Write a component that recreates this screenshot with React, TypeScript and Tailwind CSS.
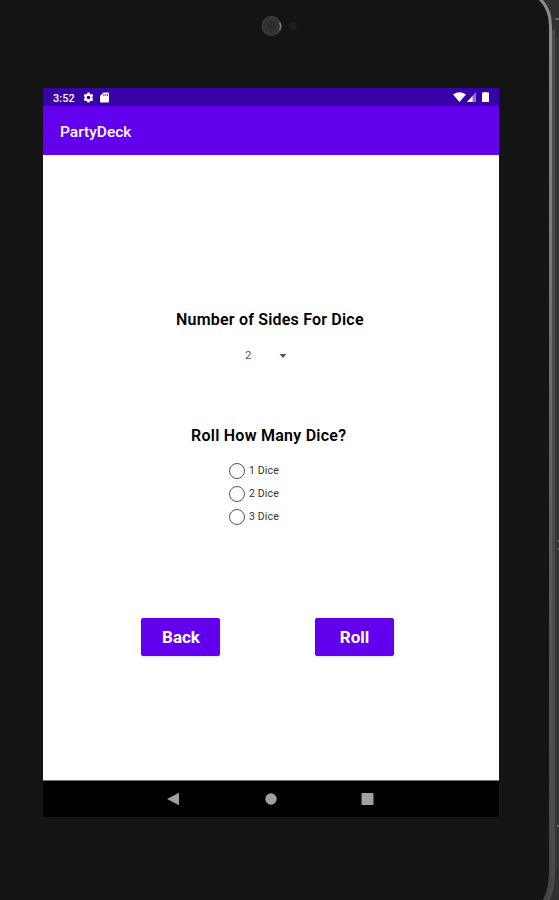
import { useState } from "react";

const diceOptions = ["1 Dice", "2 Dice", "3 Dice"];

const TabletEdge = () => (
  <svg
    className="absolute top-0 right-0"
    width="29"
    height="900"
    viewBox="530 0 29 900"
    fill="none"
  >
    <defs>
      <linearGradient id="rim" x1="0" y1="0" x2="0" y2="900" gradientUnits="userSpaceOnUse">
        <stop offset="0" stopColor="#8c8c8c" />
        <stop offset="0.3" stopColor="#777777" />
        <stop offset="0.6" stopColor="#5c5c5c" />
        <stop offset="1" stopColor="#454545" />
      </linearGradient>
    </defs>
    <path d="M539 0Q549 9 549 25V872Q549 890 543 900H559V0Z" fill="#303030" />
    <path d="M540 -1Q550.500 9 550.500 26V873Q550.500 889 544 901" stroke="url(#rim)" strokeWidth="3" />
    <path d="M553.500 30V872Q553.500 888 548 900" stroke="#4b4b4b" strokeWidth="3" />
    <path d="M556.500 38V870" stroke="#3d3d3d" />
    <path d="M555 19H559M557 826H559" stroke="#999999" />
    <path d="M557 541H559M557 549H559" stroke="#77775f" />
  </svg>
);

const Camera = () => (
  <svg className="absolute top-[14px] left-[258px]" width="44" height="26" viewBox="0 0 44 26">
    <circle cx="13.500" cy="12" r="9" fill="#303030" stroke="#3c3c3c" strokeWidth="2" />
    <circle cx="13.500" cy="11.500" r="5" fill="#2c2c2c" stroke="#393939" />
    <path d="M21.500 8.500Q24 12 21.500 16" stroke="#7c7c7c" strokeWidth="1.500" fill="none" />
    <circle cx="34.500" cy="12" r="4" fill="#1e1e1e" />
  </svg>
);

const StatusBar = () => (
  <div className="flex h-[18px] items-center justify-between bg-[#3700a8] pr-[10px] pl-[10px] text-white">
    <div className="flex items-center">
      <span className="w-[30px] pt-[2px] text-[11px] leading-none font-medium">3:52</span>
      <svg width="11" height="11" viewBox="0 0 24 24" fill="currentColor">
        <path
          fillRule="evenodd"
          d="M9.500 1h5l.6 3 2 1.200L20 4l2.500 4.500L20.300 10.500v3l2.200 2L20 20l-3-1-2 1.200-.6 2.800h-5l-.6-2.800L7 19l-3 1-2.500-4.500 2.200-2v-3L1.500 8.500 4 4l3 1.200L9 4ZM12 8a4 4 0 1 0 0 8 4 4 0 0 0 0-8Z"
        />
      </svg>
      <svg className="ml-[6px]" width="9" height="11" viewBox="0 0 9 11" fill="currentColor">
        <path
          fillRule="evenodd"
          d="M3.500.5H8q1 0 1 1v8q0 1-1 1H1q-1 0-1-1V4ZM3.300 2.300v1.500h1V2.300ZM5.200 2.300v1.500h1V2.300ZM7 2.300v1.500h1V2.300Z"
        />
      </svg>
    </div>
    <div className="flex items-center">
      <svg width="13" height="10" viewBox="0 0 13 10" fill="currentColor">
        <path d="M0 2.500Q6.500-2 13 2.500L6.500 10Z" />
      </svg>
      <svg className="ml-[1px]" width="9" height="10" viewBox="0 0 9 10" fill="currentColor">
        <path d="M9 0V10H0Z" opacity="0.45" />
        <path d="M5.500 4V10H0Z" />
      </svg>
      <svg className="ml-[6px]" width="7" height="10" viewBox="0 0 7 10" fill="currentColor">
        <path d="M2 0H5V.5H7V10H0V.5H2Z" />
      </svg>
    </div>
  </div>
);

const NavigationBar = () => (
  <div className="flex h-[36px] items-center bg-black pl-[124px] text-[#a0a0a0]">
    <svg width="208" height="14" viewBox="0 0 208 14" fill="currentColor">
      <path d="M0 7 12 .8V13.200Z" />
      <circle cx="104" cy="7" r="5.700" />
      <rect x="194.500" y="1" width="12" height="12" rx="1" />
    </svg>
  </div>
);

const App = () => {
  const [selected, setSelected] = useState("");

  return (
    <div className="relative h-[900px] w-[559px] overflow-hidden bg-[#141414] pt-[88px] pl-[43px] font-['Roboto',sans-serif]">
      <Camera />
      <TabletEdge />

      {/* Screen */}
      <div className="flex h-[729px] w-[456px] flex-col">
        <StatusBar />
        <header className="flex h-[49px] items-center bg-[#6200ee] pl-[17px]">
          <h1 className="pt-[4px] text-[15.500px] font-medium text-white">PartyDeck</h1>
        </header>

        <main className="flex flex-1 flex-col border-b border-[#777777] bg-white text-black">
          <h2 className="mt-[153px] ml-[133px] text-[16px] leading-6 font-semibold tracking-[0.2px] whitespace-nowrap">
            Number of Sides For Dice
          </h2>
          <div className="mt-[13px] ml-[201px] flex h-[22px] w-[43px] items-center justify-between text-[11.500px] text-[#555555]">
            <span className="pl-[1px]">2</span>
            <svg width="8" height="4" viewBox="0 0 8 4" fill="#555555">
              <path d="M.5 0H7.500L4 4Z" />
            </svg>
          </div>

          <h2 className="mt-[57px] ml-[148px] text-[16px] leading-6 font-semibold tracking-[0.25px] whitespace-nowrap">
            Roll How Many Dice?
          </h2>
          <div className="mt-[11px] ml-[186px] flex flex-col">
            {diceOptions.map((option) => (
              <button
                key={option}
                className="flex h-[23px] items-center text-[10.500px] text-[#333333]"
                onClick={() => setSelected(option)}
              >
                <span className="flex size-[16px] items-center justify-center rounded-full border-[1.500px] border-[#555555]">
                  {selected === option && <span className="size-2 rounded-full bg-[#6200ee]" />}
                </span>
                <span className="ml-[4px] tracking-[0.15px]">{option}</span>
              </button>
            ))}
          </div>

          <div className="mt-[90px] ml-[98px] flex gap-[95px] text-[17px] font-bold text-white">
            <button className="h-[38px] w-[79px] rounded-[2px] bg-[#6200ee] pt-[2px] pl-[1px] shadow-sm">
              Back
            </button>
            <button className="h-[38px] w-[79px] rounded-[2px] bg-[#6200ee] pt-[2px] shadow-sm">
              Roll
            </button>
          </div>
        </main>

        <NavigationBar />
      </div>
    </div>
  );
};

export default App;
